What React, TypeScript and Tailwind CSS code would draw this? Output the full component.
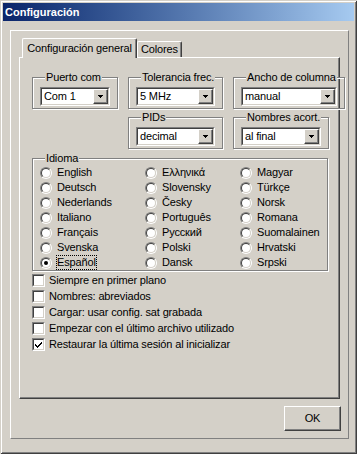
import React from "react";

const raised =
    "border border-t-white border-l-white border-r-[#404040] border-b-[#404040] shadow-[inset_-1px_-1px_#808080]";

function Arrow ()
{
    return (
        <svg width="5" height="3" viewBox="0 0 5 3">
            <path d="M0 0h5L2.5 3z" fill="#000" shapeRendering="crispEdges" />
        </svg>
    );
}

function Combo ( { value }: { value: string } )
{
    return (
        <div className="flex h-[19px] border border-t-[#808080] border-l-[#808080] border-r-white border-b-white">
            <div className="flex flex-1 items-center border border-t-[#404040] border-l-[#404040] border-r-[#D4D0C8] border-b-[#D4D0C8] bg-white">
                <span className="flex-1 pl-[2px] whitespace-nowrap">{ value }</span>
                <div className={ `flex h-full w-[15px] items-center justify-center bg-[#D4D0C8] ${ raised }` }>
                    <Arrow />
                </div>
            </div>
        </div>
    );
}

function Group ( { label, value, className = "" }: { label: string; value: string; className?: string } )
{
    return (
        <fieldset className={ `border border-[#808080] px-[7px] pt-[3px] pb-[2px] shadow-[inset_1px_1px_#fff,1px_1px_#fff] ${ className }` }>
            <legend className="ml-[5px] bg-[#D4D0C8] px-[1px] whitespace-nowrap">{ label }</legend>
            <Combo value={ value } />
        </fieldset>
    );
}

function Radio ( { checked }: { checked?: boolean } )
{
    return (
        <span className="flex h-[12px] w-[12px] shrink-0 items-center justify-center rounded-full border border-t-[#808080] border-l-[#808080] border-r-white border-b-white">
            <span className="flex h-[10px] w-[10px] items-center justify-center rounded-full border border-t-[#404040] border-l-[#404040] border-r-[#D4D0C8] border-b-[#D4D0C8] bg-white">
                { checked && <span className="h-[4px] w-[4px] rounded-full bg-black" /> }
            </span>
        </span>
    );
}

function Check ( { checked }: { checked?: boolean } )
{
    return (
        <span className="flex h-[13px] w-[13px] shrink-0 border border-t-[#808080] border-l-[#808080] border-r-white border-b-white">
            <span className="flex flex-1 items-center justify-center border border-t-[#404040] border-l-[#404040] border-r-[#D4D0C8] border-b-[#D4D0C8] bg-white">
                { checked && (
                    <svg width="7" height="7" viewBox="0 0 7 7">
                        <path d="M0 2v3l2 2 5-5V-0L2 5z" fill="#000" shapeRendering="crispEdges" />
                    </svg>
                ) }
            </span>
        </span>
    );
}

const languages = [
    "English", "Deutsch", "Nederlands", "Italiano", "Français", "Svenska", "Español",
    "Ελληνικά", "Slovensky", "Česky", "Português", "Русский", "Polski", "Dansk",
    "Magyar", "Türkçe", "Norsk", "Romana", "Suomalainen", "Hrvatski", "Srpski",
];

const options = [
    { label: "Siempre en primer plano", checked: false },
    { label: "Nombres: abreviados", checked: false },
    { label: "Cargar: usar config. sat grabada", checked: false },
    { label: "Empezar con el último archivo utilizado", checked: false },
    { label: "Restaurar la última sesión al inicializar", checked: true },
];

export default function App ()
{
    return (
        <div className="h-[454px] w-[357px] bg-[#D4D0C8] p-[3px] font-['Liberation_Sans',Arial,sans-serif] text-[11px] leading-[13px] tracking-[-0.15px] text-black shadow-[inset_1px_1px_#D4D0C8,inset_-1px_-1px_#404040,inset_2px_2px_#fff,inset_-2px_-2px_#808080]">
            <div className="flex h-[18px] items-center bg-linear-to-r from-[#0A246A] to-[#A6CAF0] pl-[2px] font-bold tracking-normal text-white">
                Configuración
            </div>

            <div className="ml-[7px] mt-[9px] flex h-[409px] w-[339px] flex-col border border-t-white border-l-white border-r-[#808080] border-b-[#808080]">
                {/* tabs */ }
                <div className="ml-[8px] mt-[7px] flex h-[19px] items-end pl-[3px]">
                    <div className="relative z-10 -mb-px flex h-[20px] w-[115px] items-center justify-center rounded-t-[2px] border-l border-t border-r border-l-white border-t-white border-r-[#404040] bg-[#D4D0C8] shadow-[inset_-1px_0_#808080]">
                        Configuración general
                    </div>
                    <div className="flex h-[16px] w-[45px] items-center justify-center rounded-t-[2px] border-l border-t border-r border-l-white border-t-white border-r-[#404040] shadow-[inset_-1px_0_#808080]">
                        Colores
                    </div>
                </div>

                {/* panel */ }
                <div className={ `ml-[8px] h-[342px] w-[321px] pl-[12px] pt-[13px] ${ raised }` }>
                    <div className="grid grid-cols-[86px_95px_95px] gap-x-[10px] gap-y-[2px]">
                        <Group label="Puerto com" value="Com 1" />
                        <Group label="Tolerancia frec." value="5 MHz" />
                        <Group label="Ancho de columna" value="manual" />
                        <Group className="col-start-2" label="PIDs" value="decimal" />
                        <Group label="Nombres acort." value="al final" />
                    </div>

                    <fieldset className="mt-[3px] w-[296px] border border-[#808080] pl-[7px] shadow-[inset_1px_1px_#fff,1px_1px_#fff]">
                        <legend className="ml-[5px] bg-[#D4D0C8] px-[1px]">Idioma</legend>
                        <div className="grid grid-flow-col grid-cols-[105px_95px_1fr] grid-rows-7">
                            { languages.map( ( lang ) => (
                                <div key={ lang } className="flex h-[15px] items-center gap-[5px] whitespace-nowrap">
                                    <Radio checked={ lang === "Español" } />
                                    { lang === "Español"
                                        ? <span className="outline-1 outline-dotted outline-black">{ lang }</span>
                                        : <span>{ lang }</span> }
                                </div>
                            ) ) }
                        </div>
                    </fieldset>

                    <div className="mt-[1px] flex flex-col">
                        { options.map( ( o ) => (
                            <div key={ o.label } className="flex h-[16px] items-center gap-[4px] whitespace-nowrap">
                                <Check checked={ o.checked } />
                                <span>{ o.label }</span>
                            </div>
                        ) ) }
                    </div>
                </div>

                <div className="mt-[7px] flex justify-end pr-[7px]">
                    <button className={ `h-[25px] w-[57px] bg-[#D4D0C8] ${ raised }` }>OK</button>
                </div>
            </div>
        </div>
    );
}
